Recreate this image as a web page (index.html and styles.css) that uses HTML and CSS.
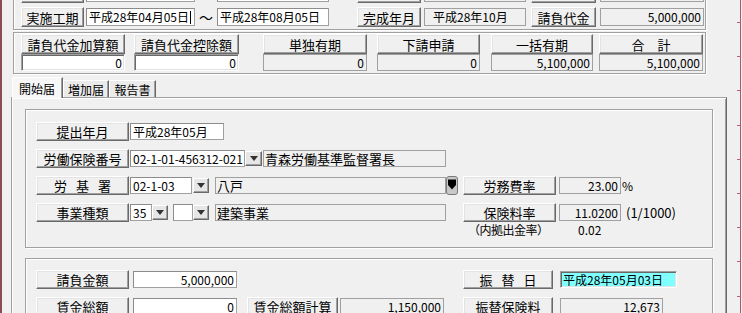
FILE: index.html
```html
<!DOCTYPE html>
<html lang="ja">
<head>
    <meta charset="UTF-8">
    <title>工事台帳 - 労働保険</title>
    <link rel="stylesheet" href="styles.css">
</head>
<body>
<div class="screen">
    <div class="edge"></div>
    <div class="main">

        <!-- 工期 -->
        <div class="group top-group">
            <div class="row period-row">
                <div class="btn b-kouki"></div>
                <div class="in d-start"></div>
                <span class="tilde"></span>
                <div class="in d-end"></div>
                <div class="btn b-kansei"></div>
                <div class="in ro d-kansei"></div>
                <div class="btn b-daikin"></div>
                <div class="in ro num d-daikin"></div>
            </div>
            <div class="row period-row">
                <div class="btn b-kouki">実施工期</div>
                <div class="in d-start">平成28年04月05日<span class="caret"></span></div>
                <span class="tilde">〜</span>
                <div class="in d-end">平成28年08月05日</div>
                <div class="btn b-kansei">完成年月</div>
                <div class="in ro d-kansei">平成28年10月</div>
                <div class="btn b-daikin">請負代金</div>
                <div class="in ro num d-daikin">5,000,000</div>
            </div>
        </div>

        <!-- 金額集計 -->
        <div class="group sum-group">
            <div class="sum-col">
                <div class="btn">請負代金加算額</div>
                <div class="in sunk num">0</div>
            </div>
            <div class="sum-col">
                <div class="btn">請負代金控除額</div>
                <div class="in sunk num">0</div>
            </div>
            <div class="sum-col">
                <div class="btn">単独有期</div>
                <div class="in ro num">0</div>
            </div>
            <div class="sum-col">
                <div class="btn">下請申請</div>
                <div class="in ro num">0</div>
            </div>
            <div class="sum-col">
                <div class="btn">一括有期</div>
                <div class="in ro num">5,100,000</div>
            </div>
            <div class="sum-col">
                <div class="btn">合　計</div>
                <div class="in ro num">5,100,000</div>
            </div>
        </div>

        <!-- タブ -->
        <div class="tabs">
            <div class="tab active">開始届</div>
            <div class="tab t-zouka">増加届</div>
            <div class="tab t-houkoku">報告書</div>
        </div>

        <div class="panel">
            <div class="group inner-group">
                <div class="frow">
                    <div class="btn b-left">提出年月</div>
                    <div class="in f-teishutsu">平成28年05月</div>
                </div>
                <div class="frow">
                    <div class="btn b-left">労働保険番号</div>
                    <div class="in f-hoken">02-1-01-456312-021</div>
                    <div class="dd dd-wide"><svg width="8" height="5" viewBox="0 0 8 5"><path d="M0 0H8L4 5Z" fill="#333"/></svg></div>
                    <div class="in ro f-name">青森労働基準監督署長</div>
                </div>
                <div class="frow">
                    <div class="btn b-left spaced">労 基 署</div>
                    <div class="in f-kijun">02-1-03</div>
                    <div class="dd dd-k"><svg width="8" height="5" viewBox="0 0 8 5"><path d="M0 0H8L4 5Z" fill="#333"/></svg></div>
                    <div class="in ro f-name f-gap">八戸</div>
                    <div class="dd-black">
                        <svg width="12" height="19" viewBox="0 0 12 19">
                            <rect x="0.5" y="0.5" width="11" height="18" rx="2.5" fill="#c8c8c8" stroke="#7a7a7a"/>
                            <path d="M2 3.5H10V9L6 13.5L2 9Z" fill="#000"/>
                        </svg>
                    </div>
                    <div class="btn b-right">労務費率</div>
                    <div class="in ro num f-rate">23.00</div>
                    <span class="unit">%</span>
                </div>
                <div class="frow">
                    <div class="btn b-left">事業種類</div>
                    <div class="in f-shurui">35</div>
                    <div class="dd"><svg width="8" height="5" viewBox="0 0 8 5"><path d="M0 0H8L4 5Z" fill="#333"/></svg></div>
                    <div class="in f-sub"></div>
                    <div class="dd"><svg width="8" height="5" viewBox="0 0 8 5"><path d="M0 0H8L4 5Z" fill="#333"/></svg></div>
                    <div class="in ro f-name f-gap">建築事業</div>
                    <div class="btn b-right b-ryoritsu">保険料率</div>
                    <div class="in ro num f-rate">11.0200</div>
                    <span class="unit per">(1/1000)</span>
                </div>
                <div class="note-row">
                    <span class="note">（内拠出金率）</span>
                    <span class="note-val">0.02</span>
                </div>
            </div>

            <div class="group inner-group lower-group">
                <div class="frow">
                    <div class="btn b-left">請負金額</div>
                    <div class="in num f-money">5,000,000</div>
                    <div class="btn b-right2 b-furikae spaced">振 替 日</div>
                    <div class="in sunk f-furikae">平成28年05月03日</div>
                </div>
                <div class="frow">
                    <div class="btn b-left">賃金総額</div>
                    <div class="in num f-money">0</div>
                    <div class="btn b-calc">賃金総額計算</div>
                    <div class="in ro num f-wage">1,150,000</div>
                    <div class="btn b-right2 b-hokenryo">振替保険料</div>
                    <div class="in ro num f-fee">12,673</div>
                </div>
            </div>
        </div>
    </div>
    <div class="ruler"></div>
</div>
</body>
</html>
```

FILE: styles.css
```css
* { box-sizing: border-box; }

body {
    margin: 0;
    background: #f0f0f0;
    font-family: "Noto Sans CJK JP", sans-serif;
    font-size: 12px;
    color: #000;
}

.screen {
    display: flex;
    width: 742px;
    height: 313px;
    overflow: hidden;
}
.edge {
    flex: none;
    width: 3px;
    border-left: 2px solid #8c4a55;
}
.main {
    flex: none;
    width: 734px;
}
.ruler {
    flex: none;
    width: 5px;
    background:
        linear-gradient(#a85a6c, #a85a6c) 3px 0 / 1px 100% no-repeat,
        repeating-linear-gradient(to bottom, #b86070 0 1px, transparent 1px 34.2px) 0 22px / 3px 100% no-repeat;
}

/* etched group box */
.group {
    border: 1px solid #a0a0a0;
    box-shadow: 1px 1px 0 #fff, inset 1px 1px 0 #fff;
}

.row { display: flex; align-items: center; }

.btn {
    flex: none;
    height: 20px;
    display: flex;
    align-items: center;
    justify-content: center;
    background: #f0f0f0;
    border: 1px solid;
    border-color: #fff #696969 #696969 #fff;
    box-shadow: inset -1px -1px 0 #a0a0a0, inset 1px 1px 0 #e3e3e3;
    font-size: 13px;
    line-height: 1;
    white-space: pre;
}
.spaced { word-spacing: 6px; }

.in {
    flex: none;
    height: 18px;
    padding: 0 2px;
    background: #fff;
    border: 1px solid #a0a0a0;
    border-top-color: #8c8c8c;
    border-left-color: #8c8c8c;
    line-height: 16px;
    white-space: nowrap;
    overflow: hidden;
}
.in.sunk {
    border-color: #a0a0a0 #fff #fff #a0a0a0;
    box-shadow: inset 1px 1px 0 #696969, inset -1px -1px 0 #e3e3e3;
}
.in.ro { background: #f0f0f0; border-color: #a0a0a0; }
.num { text-align: right; }

.caret {
    display: inline-block;
    width: 1px;
    height: 13px;
    margin-left: 1px;
    background: #000;
    vertical-align: -2px;
}

/* 工期 */
.top-group {
    width: 693px;
    margin: -21px 0 0 10px;
    padding: 3px 0 2px 7px;
}
.period-row { height: 20px; }
.period-row + .period-row { margin-top: 4px; }
.b-kouki { width: 63px; }
.d-start { width: 109px; margin-left: 2px; }
.tilde { flex: none; width: 22px; text-align: center; font-size: 14px; }
.d-end { width: 112px; }
.b-kansei { width: 64px; margin-left: 28px; }
.d-kansei { width: 102px; margin-left: 3px; padding-left: 8px; }
.b-daikin { width: 65px; margin-left: 5px; }
.d-daikin { width: 104px; margin-left: 4px; }

/* 金額集計 */
.sum-group {
    display: flex;
    width: 693px;
    margin: 2px 0 0 10px;
    padding: 1px 0 2px 7px;
}
.sum-col { flex: none; display: flex; flex-direction: column; }
.sum-col .in { height: 17px; line-height: 15px; }
.sum-col:nth-child(1) { width: 104px; }
.sum-col:nth-child(2) { width: 105px; margin-left: 9px; }
.sum-col:nth-child(3) { width: 104px; margin-left: 24px; }
.sum-col:nth-child(4) { width: 103px; margin-left: 10px; }
.sum-col:nth-child(5) { width: 102px; margin-left: 11px; }
.sum-col:nth-child(6) { width: 104px; margin-left: 6px; }

/* タブ */
.tabs {
    display: flex;
    align-items: flex-start;
    height: 20px;
    margin: 3px 0 0 9px;
    position: relative;
    z-index: 1;
}
.tab {
    flex: none;
    height: 17px;
    margin-top: 3px;
    display: flex;
    align-items: center;
    justify-content: center;
    background: #ebebeb;
    border: 1px solid;
    border-color: #fff #696969 transparent #fff;
    border-bottom: none;
    box-shadow: inset -1px 0 0 #a0a0a0;
    font-size: 12px;
}
.tab.active {
    width: 51px;
    height: 21px;
    margin-top: 0;
    background: #f7f7f7;
    justify-content: flex-start;
    padding-left: 6px;
}
.t-zouka { width: 46px; }
.t-houkoku { width: 47px; }

.panel {
    width: 716px;
    height: 240px;
    margin-left: 8px;
    padding: 11px 0 0 13px;
    border: 1px solid;
    border-color: #a0a0a0 #696969 #696969 #a0a0a0;
    box-shadow: inset 1px 1px 0 #fff, inset -1px 0 0 #a0a0a0;
}

.inner-group {
    width: 688px;
    padding: 12px 0 11px 10px;
}
.lower-group {
    margin-top: 10px;
    padding-top: 11px;
}

.frow {
    display: flex;
    align-items: center;
    height: 19px;
}
.frow + .frow { margin-top: 8px; }
.frow .btn { height: 19px; }
.frow .in { height: 17px; line-height: 15px; }

.b-left { width: 93px; }
.b-right { width: 93px; margin-left: 5px; }
.b-ryoritsu { margin-left: 17px; }
.b-right2 { width: 90px; }

.dd {
    flex: none;
    width: 16px;
    height: 15px;
    display: flex;
    align-items: center;
    justify-content: center;
    background: #e6e6e6;
    border: 1px solid;
    border-color: #fff #696969 #696969 #fff;
    box-shadow: inset -1px -1px 0 #a0a0a0;
}
.dd-wide { width: 17px; }
.dd-k { margin-left: 1px; }
.dd-black { flex: none; display: flex; }

.f-teishutsu { width: 94px; margin-left: 1px; }
.f-hoken { width: 115px; margin-left: 1px; }
.f-kijun { width: 62px; margin-left: 1px; }
.f-shurui { width: 22px; margin-left: 1px; }
.f-sub { width: 20px; margin-left: 5px; }
.f-name {
    width: 183px;
    margin-left: 1px;
    font-size: 13px;
    padding-left: 1px;
}
.f-gap { width: 231px; margin-left: 6px; }
.f-rate { width: 62px; margin-left: 3px; }

.unit { flex: none; margin-left: 1px; font-size: 12px; }
.unit.per { margin-left: 5px; font-size: 13px; }

.note-row {
    display: flex;
    align-items: center;
    height: 14px;
    padding-left: 432px;
    font-size: 12px;
}
.note {
    flex: none;
    width: 110px;
    letter-spacing: -0.5px;
    font-feature-settings: "fwid" 1;
}
.note-val { flex: none; }

.f-money { width: 104px; margin-left: 4px; }
.b-furikae { margin-left: 226px; }
.f-furikae { width: 117px; margin-left: 7px; background: #80ffff; }
.b-calc { width: 91px; margin-left: 10px; }
.f-wage { width: 104px; margin-left: 2px; }
.b-hokenryo { margin-left: 19px; }
.f-fee { width: 103px; margin-left: 7px; }
```
